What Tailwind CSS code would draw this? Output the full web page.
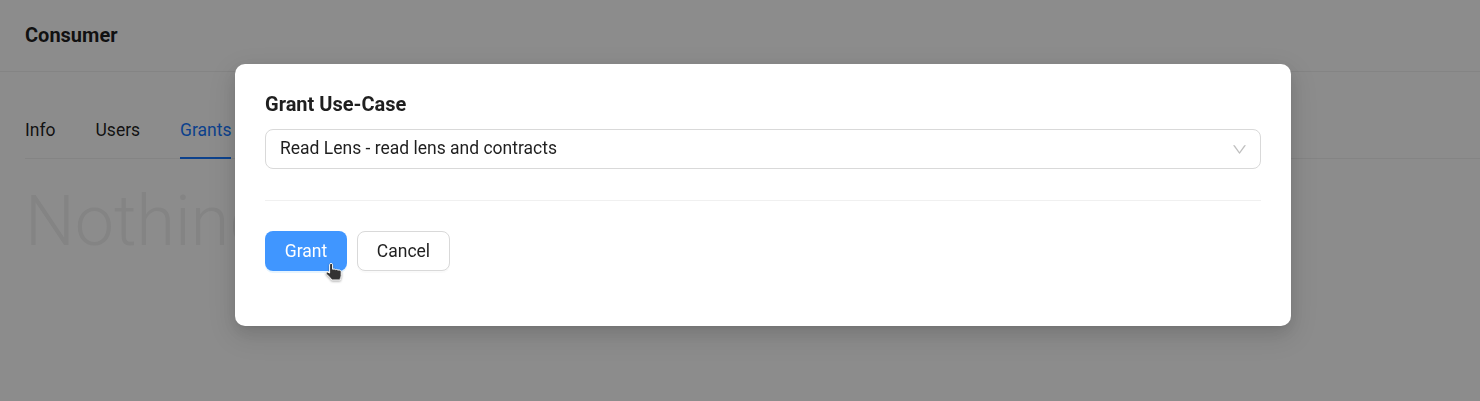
<!DOCTYPE html>
<html lang="en">
<head>
<meta charset="utf-8">
<title>Consumer</title>
<script src="https://cdn.jsdelivr.net/npm/@tailwindcss/browser@4"></script>
</head>
<body class="h-[401px] overflow-hidden bg-white font-['Roboto',sans-serif] text-[17.5px] leading-7 text-black/88">
  <header class="flex h-[72px] items-center border-b border-[#f0f0f0] px-[25px] pb-0.5">
    <h1 class="text-xl font-bold">Consumer</h1>
  </header>
  <main class="pt-[30px] pl-[25px]">
    <nav class="flex h-[57px] gap-10 border-b border-[#f0f0f0]">
      <a class="h-[57px] w-[30.5px] pt-[14px]">Info</a>
      <a class="h-[57px] w-[44.5px] pt-[14px]">Users</a>
      <a class="h-[57px] w-[51px] border-b-2 border-[#1677ff] pt-[14px] text-[#1677ff]">Grants</a>
    </nav>
    <p class="mt-[20px] text-[70px] leading-[84px] font-light text-[#f0f0f0]">Nothing</p>
  </main>

  <div class="fixed inset-0 flex items-start bg-black/45 pt-16 pl-[235px]">
    <section class="h-[262px] w-[1056px] rounded-[10px] bg-white px-[30px] pt-[26px] shadow-[0_6px_16px_0_rgba(0,0,0,0.1),0_3px_6px_-4px_rgba(0,0,0,0.12),0_9px_28px_8px_rgba(0,0,0,0.08)]">
      <h2 class="text-xl leading-7 font-bold">Grant Use-Case</h2>
      <div class="mt-[11px] flex h-10 items-center justify-between rounded-lg border border-[#d9d9d9] pr-[13px] pl-[14px]">
        <span class="pb-0.5">Read Lens - read lens and contracts</span>
        <svg class="size-[15px] text-black/25" viewBox="64 64 896 896" fill="currentColor"><path d="M884 256h-75c-5.1 0-9.9 2.5-12.9 6.6L512 654.2 227.9 262.6c-3-4.1-7.8-6.6-12.9-6.6h-75c-6.5 0-10.3 7.4-6.5 12.7l352.6 486.1c12.8 17.6 39 17.6 51.7 0l352.6-486.1c3.9-5.3.1-12.7-6.4-12.7z"/></svg>
      </div>
      <hr class="mt-[31px] border-t border-[#f0f0f0]">
      <div class="mt-[30px] flex gap-[10px]">
        <button class="relative h-10 w-[82px] rounded-lg bg-[#4096ff] text-white shadow-[0_2px_0_rgba(5,145,255,0.1)]">Grant
          <svg class="absolute top-[31px] left-[60px] h-[20px] w-[18px] drop-shadow-[0_1px_1px_rgba(0,0,0,0.35)]" viewBox="0 0 18 20">
            <path d="M4.600 2.800C4.600 .9 7.600 .9 7.600 2.800V7.200L9.200 7l1.200.6 1.300-.2 1.200.6 1.300 0c1.500.1 2 .9 2 2.200v3.200c0 1.500-.4 2.300-.9 3V18H6.600c-.3-1.300-1.300-2.200-2.400-3.200L1.300 12c-1-1.200.2-2.500 1.600-1.900l1.700 1z" fill="#333" stroke="#fff" stroke-width="1" stroke-linejoin="round"/>
          </svg>
        </button>
        <button class="h-10 w-[93px] rounded-lg border border-[#d9d9d9] bg-white shadow-[0_2px_0_rgba(0,0,0,0.02)]">Cancel</button>
      </div>
    </section>
  </div>
</body>
</html>
